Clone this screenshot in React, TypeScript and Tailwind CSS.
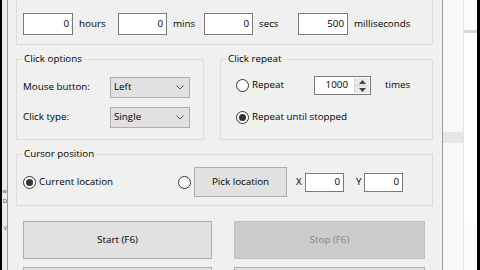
import React from "react";

const font = { fontFamily: '"Open Sans", "Liberation Sans", sans-serif' };

function GroupBox({ label, className, children }: { label: string; className: string; children?: React.ReactNode }) {
  return (
    <div className={`relative border border-[#dcdcdc] ${className}`}>
      <span className="absolute left-[5px] top-[-8px] bg-[#f0f0f0] px-[2px] leading-[14px]">{label}</span>
      {children}
    </div>
  );
}

function TextBox({ value, className }: { value: string; className: string }) {
  return (
    <div className={`flex items-center justify-end border border-[#7a7a7a] bg-white pr-[3px] ${className}`}>{value}</div>
  );
}

function Radio({ checked }: { checked?: boolean }) {
  return (
    <span className="flex h-[13px] w-[13px] shrink-0 items-center justify-center rounded-full border border-[#333] bg-white">
      {checked && <span className="h-[7px] w-[7px] rounded-full bg-[#333]" />}
    </span>
  );
}

function Combo({ value }: { value: string }) {
  return (
    <div className="flex h-[21px] w-[80px] items-center justify-between border border-[#adadad] bg-[#e1e1e1] pl-[3px] pr-[5px]">
      <span>{value}</span>
      <svg width="8" height="5" viewBox="0 0 8 5">
        <polyline points="0.5,0.5 4,4 7.5,0.5" fill="none" stroke="#555" strokeWidth="1" />
      </svg>
    </div>
  );
}

export default function App() {
  return (
    <div className="flex h-[270px] w-[480px] overflow-hidden bg-black text-[9.8px] text-black" style={font}>
      <div className="w-[2px] bg-black" />
      <div className="flex w-[5px] flex-col items-end overflow-hidden bg-[#ececec] text-[6px] leading-[8px] text-[#444]">
        <div className="h-[187px] shrink-0" />
        <div className="h-[10px] shrink-0">w</div>
        <div className="h-[10px] shrink-0">D</div>
        <div className="h-[17px] shrink-0" />
        <div className="h-[10px] shrink-0">V</div>
      </div>

      {/* main window */}
      <div className="flex w-[436px] flex-col border-x border-[#9a9a9a] bg-[#f0f0f0] pl-[8px] pr-[9px]">
        <GroupBox label="Click interval" className="-mt-[6px] h-[51px] shrink-0 pl-[6px] pt-[18px]">
          <div className="flex h-[22px] items-center">
            <TextBox value="0" className="h-[22px] w-[50px]" />
            <span className="w-[45px] pl-[6px]">hours</span>
            <TextBox value="0" className="h-[22px] w-[49px]" />
            <span className="w-[37px] pl-[6px]">mins</span>
            <TextBox value="0" className="h-[22px] w-[49px]" />
            <span className="w-[45px] pl-[6px]">secs</span>
            <TextBox value="500" className="h-[22px] w-[50px]" />
            <span className="pl-[6px]">milliseconds</span>
          </div>
        </GroupBox>

        <div className="mt-[14px] flex h-[81px] shrink-0 gap-[16px]">
          <GroupBox label="Click options" className="h-[81px] w-[188px] pl-[6px] pt-[17px]">
            <div className="flex h-[21px] items-center">
              <span className="w-[87px]">Mouse button:</span>
              <Combo value="Left" />
            </div>
            <div className="mt-[9px] flex h-[21px] items-center">
              <span className="w-[87px]">Click type:</span>
              <Combo value="Single" />
            </div>
          </GroupBox>
          <GroupBox label="Click repeat" className="h-[81px] flex-1 pl-[15px] pt-[16px]">
            <div className="flex h-[19px] items-center">
              <Radio />
              <span className="ml-[3px] w-[62px]">Repeat</span>
              <div className="flex h-[19px] w-[57px] items-center border border-[#7a7a7a] bg-white">
                <span className="flex-1 pr-[6px] text-right">1000</span>
                <div className="mr-[1px] flex h-[15px] w-[15px] flex-col border-l border-[#d4d4d4] bg-[#eaeaea]">
                  <div className="flex flex-1 items-center justify-center border-b border-[#d4d4d4]">
                    <svg width="7" height="4" viewBox="0 0 7 4"><polygon points="0,4 3.5,0 7,4" fill="#444" /></svg>
                  </div>
                  <div className="flex flex-1 items-center justify-center">
                    <svg width="7" height="4" viewBox="0 0 7 4"><polygon points="0,0 3.5,4 7,0" fill="#444" /></svg>
                  </div>
                </div>
              </div>
              <span className="ml-[14px]">times</span>
            </div>
            <div className="mt-[13px] flex h-[19px] items-center">
              <Radio checked />
              <span className="ml-[3px]">Repeat until stopped</span>
            </div>
          </GroupBox>
        </div>

        <GroupBox label="Cursor position" className="mt-[14px] h-[52px] shrink-0 pl-[6px] pt-[12px]">
          <div className="flex h-[30px] items-center">
            <Radio checked />
            <span className="ml-[3px] w-[139px]">Current location</span>
            <Radio />
            <div className="ml-[3px] flex h-[30px] w-[93px] items-center justify-center border border-[#adadad] bg-[#e1e1e1]">
              Pick location
            </div>
            <span className="ml-[9px] w-[9px]">X</span>
            <TextBox value="0" className="h-[19px] w-[39px]" />
            <span className="ml-[12px] w-[8px]">Y</span>
            <TextBox value="0" className="h-[19px] w-[39px]" />
          </div>
        </GroupBox>

        <div className="mt-[15px] flex shrink-0 gap-[22px] pl-[7px]">
          <div className="flex h-[38px] w-[189px] items-center justify-center border border-[#adadad] bg-[#e1e1e1]">Start (F6)</div>
          <div className="flex h-[38px] w-[191px] items-center justify-center border border-[#bfbfbf] bg-[#cccccc] text-[#838383]">Stop (F6)</div>
        </div>
        <div className="mt-[8px] flex shrink-0 gap-[22px] pl-[7px]">
          <div className="h-[38px] w-[189px] border border-[#adadad] bg-[#e1e1e1]" />
          <div className="h-[38px] w-[191px] border border-[#adadad] bg-[#e1e1e1]" />
        </div>
      </div>

      <div className="flex w-[20px] flex-col bg-[#f8f8f8]">
        <div className="h-[132px]" />
        <div className="h-[11px] bg-[#e6e6e6]" />
      </div>
      <div className="flex w-[14px] flex-col border-l border-[#e3e3e3] bg-[#fbfbfb]">
        <div className="mt-[30px] h-[3px] bg-[#d8d8d8]" />
        <div className="h-[190px] bg-white" />
      </div>
      <div className="w-[3px] bg-black" />
    </div>
  );
}
